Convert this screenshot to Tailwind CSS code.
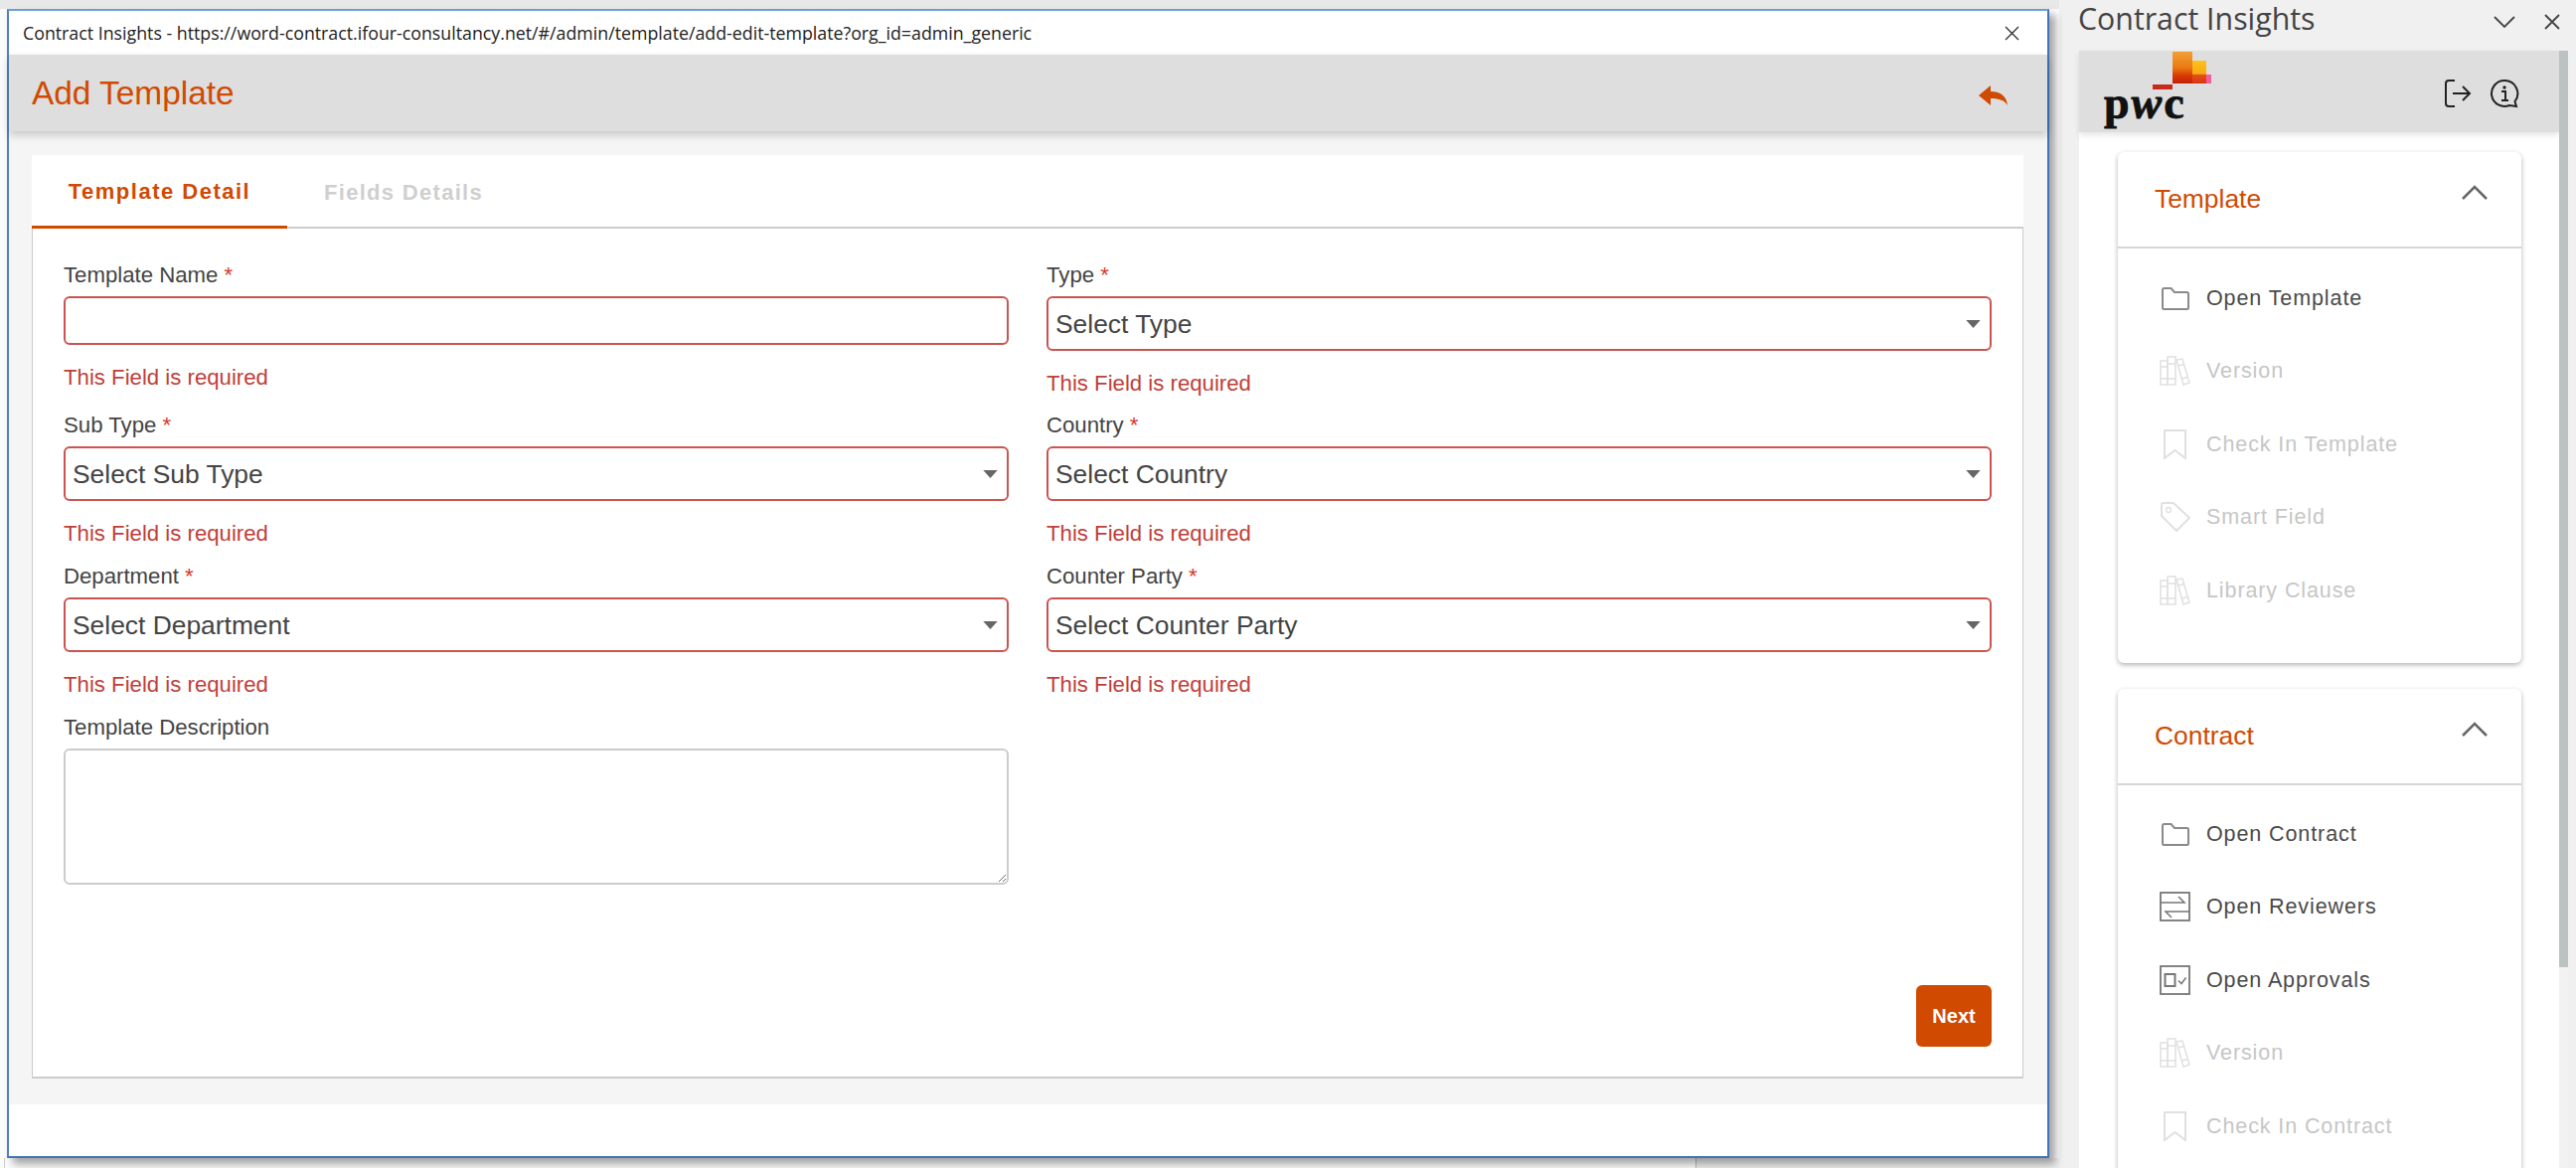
<!DOCTYPE html>
<html>
<head>
<meta charset="utf-8">
<script src="https://cdn.jsdelivr.net/npm/@tailwindcss/browser@4"></script>
<title>Contract Insights</title>
</head>
<body class="m-0 h-[1175px] w-[2592px] overflow-hidden bg-[#f0f0f0] font-['Liberation_Sans',Arial,sans-serif]">
<svg class="hidden" xmlns="http://www.w3.org/2000/svg">
  <symbol id="folder" viewBox="0 0 31 30"><path d="M3 6.500a1.500 1.500 0 0 1 1.500-1.500h7l3.500 4h12.500a1.500 1.500 0 0 1 1.500 1.500v14a1.500 1.500 0 0 1-1.500 1.500h-23a1.500 1.500 0 0 1-1.500-1.500z" fill="none" stroke="currentColor" stroke-width="2"/></symbol>
  <symbol id="books" viewBox="0 0 31 30"><g fill="none" stroke="currentColor" stroke-width="1.500"><rect x="1" y="5" width="7" height="24"/><rect x="8" y="1" width="8" height="28"/><path d="M1 11h7M1 23h7M8 8h8M8 23h8"/><path d="M17 4l6-1 7 24-6 2z"/><path d="M19 10l6-1.500M23 23l5-1.500"/></g></symbol>
  <symbol id="bookmark" viewBox="0 0 31 30"><path d="M5 1h21v28l-10.500-8L5 29z" fill="none" stroke="currentColor" stroke-width="2"/></symbol>
  <symbol id="tag" viewBox="0 0 31 30"><g fill="none" stroke="currentColor" stroke-width="2"><path d="M2 3a2 2 0 0 1 2-2h10l16 15-13 13L2 14z"/><circle cx="9" cy="8" r="2.500" stroke-width="1.300"/></g></symbol>
  <symbol id="swap" viewBox="0 0 31 30"><g fill="none" stroke="currentColor" stroke-width="1.800"><rect x="1" y="1" width="29" height="28"/><path d="M1 11h24l-6-6M30 20H6l6 6" stroke-width="1.500"/></g></symbol>
  <symbol id="approve" viewBox="0 0 31 30"><g fill="none" stroke="currentColor" stroke-width="1.800"><rect x="1" y="1" width="29" height="28"/><rect x="5.500" y="9" width="10" height="12" stroke-width="2"/><path d="M19 15.500l3 3 4.500-6" stroke-width="1.500"/></g></symbol>
  <symbol id="caret" viewBox="0 0 16 10"><path d="M0 1h16L8 10z" fill="currentColor"/></symbol>
</svg>

<div class="flex h-full w-full">
  <!-- document area with dialog -->
  <div class="relative h-full w-[2072px] shrink-0 bg-[#fbfbfb]">
    <div class="h-[9px] bg-[#e8e8e8]"></div>
    <div class="absolute left-[1706px] top-[1165px] h-[10px] w-[366px] border-l border-[#bbbbbb] bg-[#eeeeee]"></div>
    <div class="absolute left-[4px] top-[1165px] h-[10px] w-px bg-[#cccccc]"></div>

    <div class="relative ml-[7px] flex h-[1156px] w-[2055px] flex-col border-[2px] border-t-[#6f9fd8] border-r-[#3f74b8] border-b-[#3f74b8] border-l-[#4f80c0] bg-white shadow-[6px_6px_8px_rgba(0,0,0,0.35)]">
      <div class="flex h-[44px] shrink-0 items-center justify-between pl-[14px] pr-[28px]">
        <span class="font-['Open_Sans',sans-serif] text-[17.770px] text-[#222222]">Contract Insights - https://word-contract.ifour-consultancy.net/#/admin/template/add-edit-template?org_id=admin_generic</span>
        <svg class="h-[15px] w-[15px]" viewBox="0 0 15 15"><path d="M1 1l13 13M14 1L1 14" stroke="#333333" stroke-width="1.400" fill="none"/></svg>
      </div>

      <div class="z-10 flex h-[77px] shrink-0 items-center justify-between bg-[#dedede] pl-[23px] pr-[40px] shadow-[0_4px_8px_rgba(0,0,0,0.18)]">
        <span class="text-[33.400px] leading-none text-[#d04a02]">Add Template</span>
        <svg class="mt-[4px] h-[20px] w-[29px]" viewBox="0 0 29 20"><path d="M12 0v6c9 0 16 4 17 14-3-5-8-7-17-7v7L0 10z" fill="#d04a02"/></svg>
      </div>

      <div class="flex-1 bg-[#f5f5f5] pl-[23px] pr-[24px] pt-[24px] pb-[25px]">
        <div class="flex h-[929px] flex-col bg-white">
          <div class="flex h-[74px] shrink-0 text-[22px] font-bold tracking-[1.500px]">
            <div class="flex w-[257px] items-center justify-center border-b-[3px] border-[#d04a02] pt-[2px] text-[#d04a02]">Template Detail</div>
            <div class="flex flex-1 items-center border-b-[2px] border-[#cccccc] pt-[2px] pl-[37px] tracking-[1.300px] text-[#cfcfcf]">Fields Details</div>
          </div>
          <div class="flex flex-1 flex-col justify-between border-x border-b-[2px] border-[#cccccc] px-[31px] pt-[34px] pb-[30px]">
            <div class="grid grid-cols-2 gap-x-[38px] text-[22.200px] text-[#444444]">
              <div>
                <div class="h-[26px] leading-[26px]">Template Name <span class="text-[#d9362b]">*</span></div>
                <input class="mt-[8px] block h-[49px] w-full rounded-[6px] border-[2px] border-[#cb5450] bg-white outline-none">
                <div class="mt-[20px] h-[26px] leading-[26px] text-[#bf3f3a]">This Field is required</div>
              </div>
              <div>
                <div class="h-[26px] leading-[26px]">Type <span class="text-[#d9362b]">*</span></div>
                <div class="mt-[8px] flex h-[55px] items-center justify-between rounded-[6px] border-[2px] border-[#cb5450] pt-[2px] pl-[7px] pr-[9px] text-[26.400px] text-[#444444]">Select Type<svg class="mb-[2px] h-[9px] w-[15px] text-[#666666]"><use href="#caret"/></svg></div>
                <div class="mt-[20px] h-[26px] leading-[26px] text-[#bf3f3a]">This Field is required</div>
              </div>

              <div class="mt-[16px]">
                <div class="h-[26px] leading-[26px]">Sub Type <span class="text-[#d9362b]">*</span></div>
                <div class="mt-[8px] flex h-[55px] items-center justify-between rounded-[6px] border-[2px] border-[#cb5450] pt-[2px] pl-[7px] pr-[9px] text-[26.400px] text-[#444444]">Select Sub Type<svg class="mb-[2px] h-[9px] w-[15px] text-[#666666]"><use href="#caret"/></svg></div>
                <div class="mt-[20px] h-[26px] leading-[26px] text-[#bf3f3a]">This Field is required</div>
              </div>
              <div class="mt-[16px]">
                <div class="h-[26px] leading-[26px]">Country <span class="text-[#d9362b]">*</span></div>
                <div class="mt-[8px] flex h-[55px] items-center justify-between rounded-[6px] border-[2px] border-[#cb5450] pt-[2px] pl-[7px] pr-[9px] text-[26.400px] text-[#444444]">Select Country<svg class="mb-[2px] h-[9px] w-[15px] text-[#666666]"><use href="#caret"/></svg></div>
                <div class="mt-[20px] h-[26px] leading-[26px] text-[#bf3f3a]">This Field is required</div>
              </div>

              <div class="mt-[17px]">
                <div class="h-[26px] leading-[26px]">Department <span class="text-[#d9362b]">*</span></div>
                <div class="mt-[8px] flex h-[55px] items-center justify-between rounded-[6px] border-[2px] border-[#cb5450] pt-[2px] pl-[7px] pr-[9px] text-[26.400px] text-[#444444]">Select Department<svg class="mb-[2px] h-[9px] w-[15px] text-[#666666]"><use href="#caret"/></svg></div>
                <div class="mt-[20px] h-[26px] leading-[26px] text-[#bf3f3a]">This Field is required</div>
              </div>
              <div class="mt-[17px]">
                <div class="h-[26px] leading-[26px]">Counter Party <span class="text-[#d9362b]">*</span></div>
                <div class="mt-[8px] flex h-[55px] items-center justify-between rounded-[6px] border-[2px] border-[#cb5450] pt-[2px] pl-[7px] pr-[9px] text-[26.400px] text-[#444444]">Select Counter Party<svg class="mb-[2px] h-[9px] w-[15px] text-[#666666]"><use href="#caret"/></svg></div>
                <div class="mt-[20px] h-[26px] leading-[26px] text-[#bf3f3a]">This Field is required</div>
              </div>

              <div class="mt-[17px]">
                <div class="h-[26px] leading-[26px]">Template Description</div>
                <textarea class="mt-[8px] block h-[137px] w-full rounded-[6px] border-[2px] border-[#cccccc] bg-white outline-none"></textarea>
              </div>
            </div>
            <div class="flex justify-end">
              <button class="h-[62px] w-[76px] rounded-[6px] bg-[#d04a02] text-[20px] font-bold text-white">Next</button>
            </div>
          </div>
        </div>
      </div>
      <div class="h-[52px] shrink-0 bg-white"></div>
    </div>
  </div>

  <!-- task pane -->
  <div class="flex h-full flex-1 flex-col bg-[#f0f0f0]">
    <div class="flex h-[51px] shrink-0 items-center justify-between pl-[19px] pr-[16px]">
      <span class="mb-[12px] font-['Open_Sans',sans-serif] text-[30.300px] leading-none text-[#444444]">Contract Insights</span>
      <div class="mb-[7px] flex items-center gap-[29px]">
        <svg class="h-[14px] w-[22px]" viewBox="0 0 22 14"><path d="M1 2l10 10L21 2" fill="none" stroke="#444444" stroke-width="1.800"/></svg>
        <svg class="h-[16px] w-[16px]" viewBox="0 0 16 16"><path d="M1 1l14 14M15 1L1 15" fill="none" stroke="#444444" stroke-width="1.800"/></svg>
      </div>
    </div>
    <div class="ml-[20px] flex min-h-0 w-[492px] flex-1">
      <div class="min-w-0 flex-1 bg-white">
        <div class="flex h-[82px] items-center justify-between bg-[#dedede] pl-[25px] pr-[40px] shadow-[0_3px_6px_rgba(0,0,0,0.1)]">
          <div class="relative h-[82px] w-[115px]">
            <svg class="absolute left-[49px] top-[1px] h-[38px] w-[60px]" viewBox="0 0 60 38">
              <defs>
                <linearGradient id="logoA" x1="0" y1="0" x2="0" y2="1"><stop offset="0" stop-color="#f2a03a"/><stop offset="0.5" stop-color="#ea7a10"/><stop offset="0.75" stop-color="#d93a05"/><stop offset="1" stop-color="#c21f0a"/></linearGradient>
                <linearGradient id="logoB" x1="0" y1="0" x2="0" y2="1"><stop offset="0" stop-color="#ffc21f"/><stop offset="0.58" stop-color="#f9a80f"/><stop offset="0.62" stop-color="#e2501a"/><stop offset="1" stop-color="#d93512"/></linearGradient>
              </defs>
              <rect x="20" y="0" width="20" height="32" fill="url(#logoA)"/>
              <rect x="40" y="9" width="14" height="23" fill="url(#logoB)"/>
              <rect x="54" y="23" width="5" height="9" fill="#f0609a"/>
              <rect x="0" y="33" width="20" height="5" fill="#c52a1a"/>
            </svg>
            <span class="absolute left-0 top-[30px] font-['Liberation_Serif',serif] text-[46px] font-bold leading-none tracking-[2px] text-[#111111] [-webkit-text-stroke:0.800px_#111111]">p<span class="italic">w</span>c</span>
          </div>
          <div class="mt-[3px] flex items-center gap-[18px]">
            <svg class="h-[30px] w-[28px]" viewBox="0 0 28 30"><path d="M11 2H5a3 3 0 0 0-3 3v20a3 3 0 0 0 3 3h6" fill="none" stroke="#222222" stroke-width="2"/><path d="M9 15h17M19 8l7 7-7 7" fill="none" stroke="#222222" stroke-width="2"/></svg>
            <svg class="h-[30px] w-[30px]" viewBox="0 0 30 30"><path d="M15 2a13 13 0 1 0 5 25l7 1-1.500-5A13 13 0 0 0 15 2z" fill="none" stroke="#222222" stroke-width="2"/><circle cx="15" cy="9" r="1.700" fill="#222222"/><path d="M12 13h4v9M12 22h7" fill="none" stroke="#222222" stroke-width="2"/></svg>
          </div>
        </div>

        <div class="flex flex-col gap-[26px] pl-[39px] pr-[38px] pt-[20px] text-[21.500px] tracking-[0.900px]">
          <section class="h-[514px] shrink-0 rounded-[6px] bg-white shadow-[0_2px_5px_rgba(0,0,0,0.3)]">
            <div class="flex h-[97px] items-center justify-between border-b-[2px] border-[#d5d5d5] pl-[37px] pr-[34px]">
              <span class="text-[26.400px] tracking-normal text-[#d04a02]">Template</span>
              <svg class="mb-[14px] h-[15px] w-[26px]" viewBox="0 0 26 15"><path d="M1 14L13 2l12 12" fill="none" stroke="#666666" stroke-width="2.500"/></svg>
            </div>
            <div class="pt-[13px]">
              <div class="flex h-[73.500px] items-center gap-[16px] pl-[42px] text-[#4a4a4a]"><svg class="h-[30px] w-[31px] text-[#8a8a8a]"><use href="#folder"/></svg>Open Template</div>
              <div class="flex h-[73.500px] items-center gap-[16px] pl-[42px] text-[#c6c6c6]"><svg class="h-[30px] w-[31px] text-[#e0e0e0]"><use href="#books"/></svg>Version</div>
              <div class="flex h-[73.500px] items-center gap-[16px] pl-[42px] text-[#c6c6c6]"><svg class="h-[30px] w-[31px] text-[#e0e0e0]"><use href="#bookmark"/></svg>Check In Template</div>
              <div class="flex h-[73.500px] items-center gap-[16px] pl-[42px] text-[#c6c6c6]"><svg class="h-[30px] w-[31px] text-[#e0e0e0]"><use href="#tag"/></svg>Smart Field</div>
              <div class="flex h-[73.500px] items-center gap-[16px] pl-[42px] text-[#c6c6c6]"><svg class="h-[30px] w-[31px] text-[#e0e0e0]"><use href="#books"/></svg>Library Clause</div>
            </div>
          </section>

          <section class="h-[540px] shrink-0 rounded-[6px] bg-white shadow-[0_2px_5px_rgba(0,0,0,0.3)]">
            <div class="flex h-[97px] items-center justify-between border-b-[2px] border-[#d5d5d5] pl-[37px] pr-[34px]">
              <span class="text-[26.400px] tracking-normal text-[#d04a02]">Contract</span>
              <svg class="mb-[14px] h-[15px] w-[26px]" viewBox="0 0 26 15"><path d="M1 14L13 2l12 12" fill="none" stroke="#666666" stroke-width="2.500"/></svg>
            </div>
            <div class="pt-[12px]">
              <div class="flex h-[73.500px] items-center gap-[16px] pl-[42px] text-[#4a4a4a]"><svg class="h-[30px] w-[31px] text-[#8a8a8a]"><use href="#folder"/></svg>Open Contract</div>
              <div class="flex h-[73.500px] items-center gap-[16px] pl-[42px] text-[#4a4a4a]"><svg class="h-[30px] w-[31px] text-[#777777]"><use href="#swap"/></svg>Open Reviewers</div>
              <div class="flex h-[73.500px] items-center gap-[16px] pl-[42px] text-[#4a4a4a]"><svg class="h-[30px] w-[31px] text-[#777777]"><use href="#approve"/></svg>Open Approvals</div>
              <div class="flex h-[73.500px] items-center gap-[16px] pl-[42px] text-[#c6c6c6]"><svg class="h-[30px] w-[31px] text-[#e0e0e0]"><use href="#books"/></svg>Version</div>
              <div class="flex h-[73.500px] items-center gap-[16px] pl-[42px] text-[#c6c6c6]"><svg class="h-[30px] w-[31px] text-[#e0e0e0]"><use href="#bookmark"/></svg>Check In Contract</div>
            </div>
          </section>
        </div>
      </div>
      <div class="flex w-[9px] shrink-0 flex-col bg-[#f2f2f2]">
        <div class="h-[922px] bg-[#bcc2c2]"></div>
      </div>
    </div>
  </div>
</div>
</body>
</html>
